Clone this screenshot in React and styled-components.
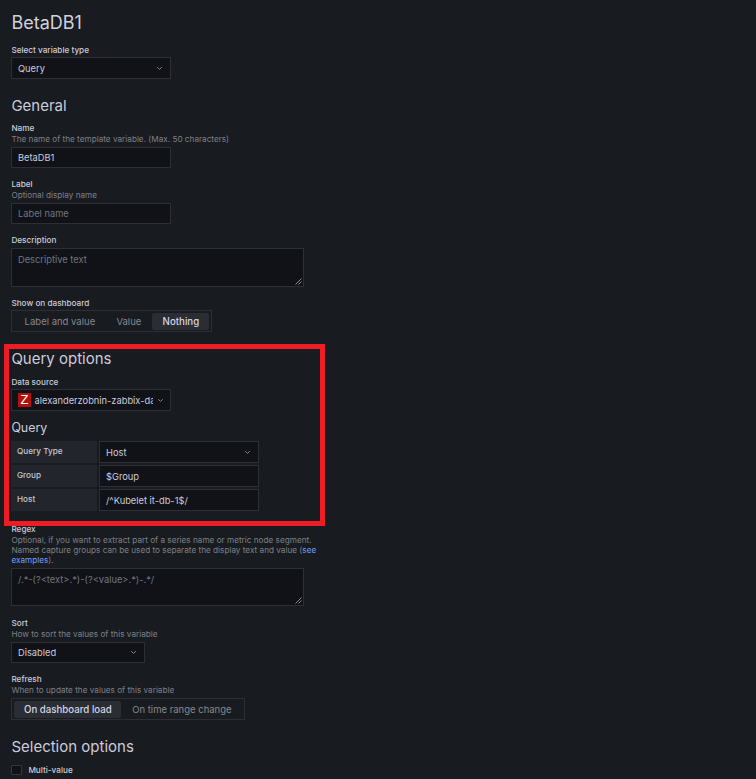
import React from 'react';
import styled, { createGlobalStyle } from 'styled-components';

const Global = createGlobalStyle`
  html, body { margin: 0; padding: 0; background: #181b1f; }
  body { font-family: Inter, "Liberation Sans", sans-serif; color: #ccccdc; }
  * { box-sizing: border-box; }
`;

const Page = styled.div`
  position: relative;
  width: 756px;
  height: 779px;
  overflow: hidden;
  padding: 11px 0 0 11.4px;
  background: #181b1f;
`;

const Title = styled.h1`
  margin: 0 0 10px;
  font-size: 18px;
  line-height: 24px;
  font-weight: 400;
  color: #d0d0de;
`;

const Heading = styled.h2`
  margin: ${p => p.$top || 0}px 0 ${p => p.$bottom || 0}px;
  font-size: ${p => p.$size || 15}px;
  line-height: ${p => p.$lh || 20}px;
  font-weight: 400;
  color: #ccccdc;
`;

const Field = styled.div`
  margin-top: ${p => p.$top || 0}px;
  margin-bottom: ${p => p.$gap ?? 11}px;
`;

const Label = styled.div`
  font-size: 8.2px;
  line-height: 10px;
  font-weight: 500;
  color: #ccccdc;
  height: ${p => p.$h || 11}px;
  white-space: nowrap;
`;

const Hint = styled.div`
  font-size: 8.2px;
  line-height: 10px;
  color: #7e8088;
  margin-bottom: ${p => p.$bottom ?? 3}px;
  white-space: nowrap;
`;

const HintLink = styled.span`
  color: #6e9fff;
`;

const Box = styled.div`
  display: flex;
  align-items: center;
  width: ${p => p.$w}px;
  height: ${p => p.$h || 22}px;
  padding: 0 6px 0 5.6px;
  background: #111217;
  border: 1px solid #2d2f35;
  font-size: 9.3px;
  color: ${p => (p.$placeholder ? '#707580' : '#ccccdc')};
  white-space: nowrap;
  overflow: hidden;
`;

const BoxText = styled.span`
  flex: 1;
  min-width: 0;
  overflow: hidden;
`;

const ChevronSvg = styled.svg`
  flex: none;
  width: 7px;
  height: 5px;
  margin-right: ${p => p.$right ?? 1}px;
  margin-left: 4px;
  color: #85878e;
`;

const Chevron = ({ right }) => (
  <ChevronSvg $right={right} viewBox="0 0 7 5" fill="none" stroke="currentColor" strokeWidth="1">
    <path d="M1.2 1.2 L3.5 3.4 L5.8 1.2" />
  </ChevronSvg>
);

const TextArea = styled.div`
  position: relative;
  width: 293px;
  height: ${p => p.$h}px;
  padding: 5px 6px 0 5.6px;
  background: #111217;
  border: 1px solid #2d2f35;
  font-size: 9.3px;
  line-height: 12px;
  color: #707580;
`;

const GripSvg = styled.svg`
  position: absolute;
  right: 1px;
  bottom: 1px;
  width: 7px;
  height: 7px;
  color: #a8a9b0;
`;

const Grip = () => (
  <GripSvg viewBox="0 0 7 7" fill="none" stroke="currentColor" strokeWidth="0.8">
    <path d="M0.5 6.5 L6.5 0.5 M3.5 6.5 L6.5 3.5" />
  </GripSvg>
);

const Radio = styled.div`
  display: inline-flex;
  align-items: center;
  height: 22px;
  padding: 0 2px;
  border: 1px solid #2d2f35;
  vertical-align: top;
`;

const RadioItem = styled.div`
  height: 17px;
  display: flex;
  align-items: center;
  justify-content: center;
  width: ${p => p.$w}px;
  border-radius: 2px;
  font-size: ${p => (p.$active ? 9.7 : 9.5)}px;
  font-weight: ${p => (p.$active ? 500 : 400)};
  color: ${p => (p.$active ? '#d5d5e2' : '#868890')};
  background: ${p => (p.$active ? '#2a2d33' : 'transparent')};
  white-space: nowrap;
`;

const Row = styled.div`
  display: flex;
  gap: 2px;
  margin-bottom: 2px;
`;

const RowLabel = styled.div`
  display: flex;
  align-items: center;
  width: 86px;
  height: 22px;
  padding: 0 6px 2px 5.6px;
  background: #22252b;
  font-size: 8.2px;
  font-weight: 500;
  color: #c5c5d3;
`;

const DsIcon = styled.span`
  flex: none;
  display: flex;
  align-items: center;
  justify-content: center;
  width: 13px;
  height: 14px;
  margin-right: 3.5px;
  background: #b30f0b;
  color: #fff;
  font-size: 13px;
  line-height: 14px;
  font-family: "Liberation Sans", sans-serif;
`;

const CheckRow = styled.div`
  display: flex;
  align-items: center;
  gap: 6px;
  margin-top: 8px;
`;

const Checkbox = styled.span`
  width: 11px;
  height: 10px;
  background: #111217;
  border: 1px solid #34363c;
  border-radius: 1px;
`;

const CheckLabel = styled.span`
  font-size: 8.2px;
  line-height: 10px;
  font-weight: 500;
  color: #ccccdc;
`;

const Annotation = styled.div`
  position: absolute;
  left: 4px;
  top: 344px;
  width: 321px;
  height: 182px;
  border: 5px solid #ee1c25;
  pointer-events: none;
`;

export default function App() {
  return (
    <Page>
      <Global />
      <Title>BetaDB1</Title>
      <Field $gap={17}>
        <Label $h={12}>Select variable type</Label>
        <Box $w={160}>
          <BoxText>Query</BoxText>
          <Chevron />
        </Box>
      </Field>

      <Heading $bottom={7}>General</Heading>
      <Field>
        <Label>Name</Label>
        <Hint>The name of the template variable. (Max. 50 characters)</Hint>
        <Box $w={160} $h={21}>BetaDB1</Box>
      </Field>
      <Field>
        <Label>Label</Label>
        <Hint>Optional display name</Hint>
        <Box $w={160} $h={21} $placeholder>Label name</Box>
      </Field>
      <Field>
        <Label $h={13}>Description</Label>
        <TextArea $h={39}>Descriptive text<Grip /></TextArea>
      </Field>
      <Field $gap={0}>
        <Label $h={12}>Show on dashboard</Label>
        <Radio>
          <RadioItem $w={91}>Label and value</RadioItem>
          <RadioItem $w={47}>Value</RadioItem>
          <RadioItem $w={57} $active>Nothing</RadioItem>
        </Radio>
      </Field>

      <Heading $top={17} $bottom={8}>Query options</Heading>
      <Field $gap={8}>
        <Label $h={12}>Data source</Label>
        <Box $w={160}>
          <DsIcon>Z</DsIcon>
          <BoxText>alexanderzobnin-zabbix-datasource</BoxText>
          <Chevron right={0} />
        </Box>
      </Field>
      <Heading $size={12.4} $lh={18} $bottom={4}>Query</Heading>
      <Row>
        <RowLabel>Query Type</RowLabel>
        <Box $w={160}>
          <BoxText>Host</BoxText>
          <Chevron />
        </Box>
      </Row>
      <Row>
        <RowLabel>Group</RowLabel>
        <Box $w={160}>$Group</Box>
      </Row>
      <Row>
        <RowLabel>Host</RowLabel>
        <Box $w={160}>/^Kubelet it-db-1$/</Box>
      </Row>

      <Field $top={13} $gap={12}>
        <Label>Regex</Label>
        <Hint $bottom={0}>Optional, if you want to extract part of a series name or metric node segment.</Hint>
        <Hint $bottom={0}>Named capture groups can be used to separate the display text and value (<HintLink>see</HintLink></Hint>
        <Hint><HintLink>examples</HintLink>).</Hint>
        <TextArea $h={38}>{'/.*-(?<text>.*)-(?<value>.*)-.*/'}<Grip /></TextArea>
      </Field>
      <Field>
        <Label>Sort</Label>
        <Hint>How to sort the values of this variable</Hint>
        <Box $w={134} $h={21}>
          <BoxText>Disabled</BoxText>
          <Chevron />
        </Box>
      </Field>
      <Field $gap={0}>
        <Label>Refresh</Label>
        <Hint>When to update the values of this variable</Hint>
        <Radio>
          <RadioItem $w={107} $active>On dashboard load</RadioItem>
          <RadioItem $w={121}>On time range change</RadioItem>
        </Radio>
      </Field>
      <Heading $top={17}>Selection options</Heading>
      <CheckRow>
        <Checkbox />
        <CheckLabel>Multi-value</CheckLabel>
      </CheckRow>
      <Annotation />
    </Page>
  );
}
